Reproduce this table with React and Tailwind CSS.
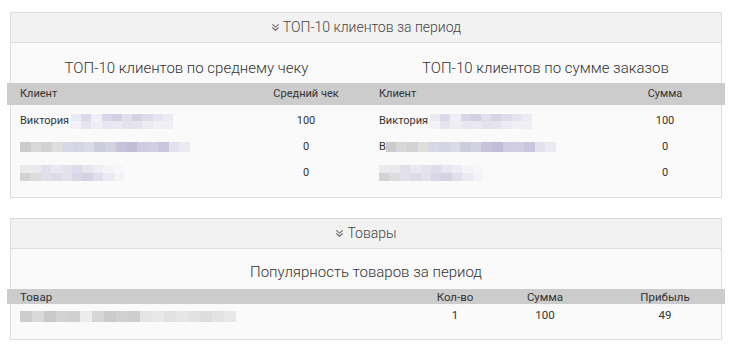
import React from 'react';

const font = { fontFamily: 'Roboto, "Noto Sans", sans-serif' };

// pixelated placeholders for hidden customer / product names
const mosaics = {
  nameA: {
    w: 'w-[102px]',
    rows: [
      ['bg-[#ebeaf2]', 'bg-[#dcdae8]', 'bg-[#f0eff5]', 'bg-[#d9d7e7]', 'bg-[#d3d0e3]', 'bg-[#e2e0ec]', 'bg-[#d6d3e5]', 'bg-[#dedcea]', 'bg-[#e6e5ef]', 'bg-[#eceaf2]'],
      ['bg-[#f3f2f7]', 'bg-[#e5e4ef]', 'bg-[#efeef5]', 'bg-[#e8e7f1]', 'bg-[#eae9f2]', 'bg-[#e3e2ed]', 'bg-[#e4e3ee]', 'bg-[#ecebf3]', 'bg-[#f0f0f6]', 'bg-[#efeff5]'],
    ],
  },
  nameB: {
    w: 'w-[170px]',
    rows: [
      ['bg-[#cbcbcb]', 'bg-[#d8d8d8]', 'bg-[#d2d2d2]', 'bg-[#dedede]', 'bg-[#d8d7e6]', 'bg-[#d5d4e4]', 'bg-[#dbdbe7]', 'bg-[#ccccdd]', 'bg-[#d2d1e1]', 'bg-[#c6c2da]', 'bg-[#c1bdd6]', 'bg-[#cfcbe0]', 'bg-[#d2cee2]', 'bg-[#c9c5dc]', 'bg-[#e3e1ec]', 'bg-[#eaeaf0]'],
    ],
  },
  nameC: {
    w: 'w-[104px]',
    rows: [
      ['bg-[#ebebeb]', 'bg-[#e8e8ee]', 'bg-[#e0e0ea]', 'bg-[#e9e8f0]', 'bg-[#e4e3ed]', 'bg-[#dedcea]', 'bg-[#e7e6ef]', 'bg-[#eeedf4]', 'bg-[#f4f4f7]', 'bg-[#f7f7f9]'],
      ['bg-[#d3d3d3]', 'bg-[#dcdcdc]', 'bg-[#e0e0e8]', 'bg-[#dcdbe7]', 'bg-[#e2e1ec]', 'bg-[#d9d7e6]', 'bg-[#d4d2e3]', 'bg-[#e1dfeb]', 'bg-[#eceaf1]', 'bg-[#f4f4f7]'],
    ],
  },
  product: {
    w: 'w-[216px]',
    rows: [
      ['bg-[#cdcdcd]', 'bg-[#d9d9d9]', 'bg-[#c9c9c9]', 'bg-[#d3d3d3]', 'bg-[#d0d0d0]', 'bg-[#ececec]', 'bg-[#d6d6d6]', 'bg-[#cbcbcb]', 'bg-[#d1d1d1]', 'bg-[#cecece]', 'bg-[#e4e4e4]', 'bg-[#e8e8e8]', 'bg-[#e1e1e1]', 'bg-[#e6e6e6]', 'bg-[#e2e2e2]', 'bg-[#dddddd]', 'bg-[#e3e3e3]', 'bg-[#e8e8e8]'],
    ],
  },
};

const Mosaic = ({ kind, h }) => {
  const m = mosaics[kind];
  return (
    <div className={`${m.w} ${h} flex flex-col shrink-0`}>
      {m.rows.map((row, i) => (
        <div key={i} className="flex flex-1">
          {row.map((c, j) => (
            <div key={j} className={`flex-1 ${c}`} />
          ))}
        </div>
      ))}
    </div>
  );
};

const DoubleChevron = () => (
  <svg width="9" height="9" viewBox="0 0 10 10" fill="none" stroke="#666" strokeWidth="1.2">
    <path d="M1.5 1.5 L5 4.5 L8.5 1.5" />
    <path d="M1.5 5 L5 8 L8.5 5" />
  </svg>
);

const PanelHeader = ({ title }) => (
  <div className="h-[30px] bg-[#f2f2f2] border-b border-[#dddddd] flex items-center justify-center gap-[3px] text-[14px] font-light text-[#444444]">
    <DoubleChevron />
    <span>{title}</span>
  </div>
);

const ClientTable = ({ title, valueLabel, rows }) => (
  <div className="flex-1">
    <div className="h-[22px] leading-[22px] mb-[4px] text-center text-[15px] font-light text-[#333333]">{title}</div>
    <div className="grid grid-cols-[1fr_120px] h-[22px] items-center bg-[#cccccc] text-[11px] text-[#333333]">
      <div className="pl-[13px]">Клиент</div>
      <div className="text-center">{valueLabel}</div>
    </div>
    <div className="pt-[3px]">
      {rows.map((r, i) => (
        <div key={i} className="grid grid-cols-[1fr_120px] h-[26px] items-center text-[11px] text-[#333333]">
          <div className="pl-[13px] flex items-center">{r.name}</div>
          <div className="text-center">{r.value}</div>
        </div>
      ))}
    </div>
  </div>
);

export default function App() {
  const left = [
    { name: <><span className="mr-[2px]">Виктория</span><Mosaic kind="nameA" h="h-[15px]" /></>, value: 100 },
    { name: <Mosaic kind="nameB" h="h-[10px]" />, value: 0 },
    { name: <Mosaic kind="nameC" h="h-[16px]" />, value: 0 },
  ];
  const right = [
    { name: <><span className="mr-[2px]">Виктория</span><Mosaic kind="nameA" h="h-[15px]" /></>, value: 100 },
    { name: <><span>В</span><Mosaic kind="nameB" h="h-[10px]" /></>, value: 0 },
    { name: <Mosaic kind="nameC" h="h-[16px]" />, value: 0 },
  ];

  return (
    <div className="w-[739px] h-[352px] bg-white pt-[12px] pl-[10px]" style={font}>
      {/* clients block */}
      <div className="w-[712px] border border-[#dddddd] bg-[#fafafa]">
        <PanelHeader title="ТОП-10 клиентов за период" />
        <div className="pt-[14px] pb-[11px] -mx-[4px] flex">
          <ClientTable title="ТОП-10 клиентов по среднему чеку" valueLabel="Средний чек" rows={left} />
          <ClientTable title="ТОП-10 клиентов по сумме заказов" valueLabel="Сумма" rows={right} />
        </div>
      </div>

      {/* products block */}
      <div className="w-[712px] mt-[20px] border border-[#dddddd] bg-[#fafafa]">
        <PanelHeader title="Товары" />
        <div className="pt-[12px] pb-[11px] -mx-[4px]">
          <div className="h-[22px] leading-[22px] mb-[6px] text-center text-[15px] font-light text-[#333333]">Популярность товаров за период</div>
          <div className="grid grid-cols-[1fr_60px_120px_120px] h-[15px] items-center bg-[#cccccc] text-[11.5px] text-[#333333]">
            <div className="pl-[13px]">Товар</div>
            <div className="text-center">Кол-во</div>
            <div className="text-center">Сумма</div>
            <div className="text-center">Прибыль</div>
          </div>
          <div className="grid grid-cols-[1fr_60px_120px_120px] h-[24px] items-center text-[11.5px] text-[#333333]">
            <div className="pl-[13px]"><Mosaic kind="product" h="h-[11px]" /></div>
            <div className="text-center">1</div>
            <div className="text-center">100</div>
            <div className="text-center">49</div>
          </div>
        </div>
      </div>
    </div>
  );
}
